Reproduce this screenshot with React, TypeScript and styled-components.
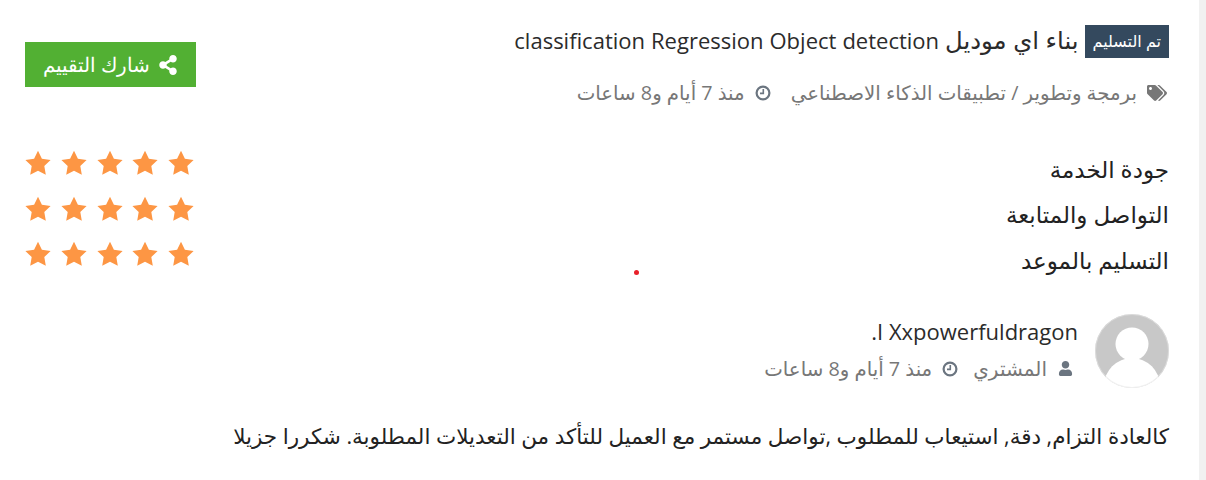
import React from "react";
import styled, { createGlobalStyle } from "styled-components";
import { FaShareAlt, FaTags, FaUser } from "react-icons/fa";

const GlobalStyle = createGlobalStyle`
  html, body {
    margin: 0;
    background: #fff;
    overflow: hidden;
  }
  body {
    font-family: "Open Sans", "Noto Sans", "DejaVu Sans", sans-serif;
  }
`;

const ratings = ["جودة الخدمة", "التواصل والمتابعة", "التسليم بالموعد"];

const Star = () => (
  <svg viewBox="0 0 26 26" width="26" height="26" fill="currentColor">
    <path d="M13 .8l3.9 8 8.7 1.2-6.3 6.1 1.5 8.7-7.8-4.1-7.8 4.1 1.5-8.7L.4 10l8.7-1.2z" />
  </svg>
);

const ClockIcon = () => (
  <Clock viewBox="0 0 16 16" fill="none" stroke="currentColor">
    <circle cx="8" cy="8" r="6.4" strokeWidth="2.2" />
    <path d="M8.3 4v4.4H5" strokeWidth="1.6" />
  </Clock>
);

const App = () => {
  return (
    <Page dir="rtl">
      <GlobalStyle />
      <Content>
        <Header>
          <div>
            <Title>
              <Badge>تم التسليم</Badge>
              <TitleText>
                <TitleArabic>بناء اي موديل</TitleArabic> classification Regression Object detection
              </TitleText>
            </Title>
            <Meta>
              <TagIcon />
              <Category>برمجة وتطوير / تطبيقات الذكاء الاصطناعي</Category>
              <MetaGap $width={20} />
              <ClockIcon />
              <TimeText>منذ 7 أيام و8 ساعات</TimeText>
            </Meta>
          </div>
          <ShareButton>
            <FaShareAlt />
            شارك التقييم
          </ShareButton>
        </Header>
        <Ratings>
          {ratings.map((r) => (
            <RatingRow key={r}>
              <RatingLabel>{r}</RatingLabel>
              <Stars>
                {[0, 1, 2, 3, 4].map((i) => (
                  <Star key={i} />
                ))}
              </Stars>
            </RatingRow>
          ))}
        </Ratings>
        <Buyer>
          <Avatar viewBox="0 0 74 74">
            <defs>
              <clipPath id="av">
                <circle cx="37" cy="37" r="37" />
              </clipPath>
            </defs>
            <circle cx="37" cy="37" r="37" fill="#c8c8c8" />
            <g clipPath="url(#av)" fill="#fff">
              <circle cx="37" cy="30" r="16.5" />
              <ellipse cx="37" cy="72" rx="28" ry="28" />
            </g>
            <circle cx="37" cy="37" r="36.5" fill="none" stroke="#e6e6e6" strokeOpacity="0.6" />
          </Avatar>
          <div>
            <BuyerName>I Xxpowerfuldragon.</BuyerName>
            <BuyerMeta>
              <UserIcon />
              <span>المشتري</span>
              <MetaGap $width={15} />
              <ClockIcon />
              <TimeText>منذ 7 أيام و8 ساعات</TimeText>
            </BuyerMeta>
          </div>
        </Buyer>
        <Review>
          كالعادة التزام, دقة, استيعاب للمطلوب ,تواصل مستمر مع العميل للتأكد من التعديلات المطلوبة. شكررا جزيلا
        </Review>
      </Content>
      <Dot />
    </Page>
  );
};

const Page = styled.div`
  position: relative;
  width: 1206px;
  height: 480px;
  background: #fff;
  border-right: 7px solid #f1f1f1;
  box-sizing: border-box;
  overflow: hidden;
  direction: rtl;
`;
const Content = styled.div`
  padding: 25px 30px 0 25px;
  color: #222;
`;
const Header = styled.div`
  display: flex;
  justify-content: space-between;
  align-items: flex-start;
`;
const Title = styled.div`
  display: flex;
  align-items: center;
  gap: 6px;
  height: 30px;
  color: #2b2b2b;
`;
const TitleText = styled.span`
  font-size: 22px;
  line-height: 30px;
  word-spacing: 0.3px;
`;
const TitleArabic = styled.span`
  font-size: 24.3px;
`;
const Badge = styled.span`
  background: #34495e;
  color: #fff;
  font-size: 16px;
  line-height: 33px;
  height: 33px;
  margin-top: 2px;
  padding: 0 8px;
`;
const Meta = styled.div`
  display: flex;
  align-items: center;
  margin-top: 25px;
  color: #777;
  font-size: 20px;
  line-height: 26px;
`;
const BuyerMeta = styled(Meta)`
  margin-top: 7px;
`;
const Category = styled.span`
  font-size: 19.8px;
`;
const TimeText = styled.span`
  font-size: 19.8px;
`;
const TagIcon = styled(FaTags)`
  flex: none;
  margin: 0 2px 0 10px;
  color: #777;
  font-size: 20px;
`;
const UserIcon = styled(FaUser)`
  flex: none;
  margin: 0 5px 0 11px;
  color: #6b7580;
  font-size: 15px;
`;
const Clock = styled.svg`
  flex: none;
  width: 16px;
  height: 16px;
  margin-left: 10px;
  color: #6b7580;
`;
const MetaGap = styled.span<{ $width: number }>`
  width: ${(p) => p.$width}px;
`;
const ShareButton = styled.button`
  display: flex;
  align-items: center;
  justify-content: center;
  gap: 8px;
  width: 171px;
  height: 45px;
  margin-top: 17px;
  border: 0;
  background: #52b033;
  color: #fff;
  font: 400 20px "Open Sans", "Noto Sans", sans-serif;
  direction: rtl;
`;
const Ratings = styled.div`
  display: flex;
  flex-direction: column;
  margin-top: 39px;
`;
const RatingRow = styled.div`
  display: flex;
  justify-content: space-between;
  align-items: center;
  height: 45.5px;
`;
const RatingLabel = styled.span`
  padding-top: 2px;
  font-size: 23px;
  color: #222;
`;
const Stars = styled.div`
  display: flex;
  gap: 9.75px;
  margin-bottom: 9px;
  color: #fd9644;
  svg {
    display: block;
  }
`;
const Buyer = styled.div`
  display: flex;
  gap: 17px;
  margin-top: 32px;
  align-items: flex-start;
`;
const Avatar = styled.svg`
  width: 74px;
  height: 74px;
  flex: none;
`;
const BuyerName = styled.div`
  font-size: 22px;
  line-height: 35px;
  color: #2b2b2b;
`;
const Review = styled.p`
  margin: 32px 0 0;
  font-size: 21.5px;
  line-height: 32px;
  color: #222;
`;
const Dot = styled.span`
  position: absolute;
  left: 634px;
  top: 270px;
  width: 5px;
  height: 5px;
  border-radius: 50%;
  background: #e8202a;
`;

export default App;
